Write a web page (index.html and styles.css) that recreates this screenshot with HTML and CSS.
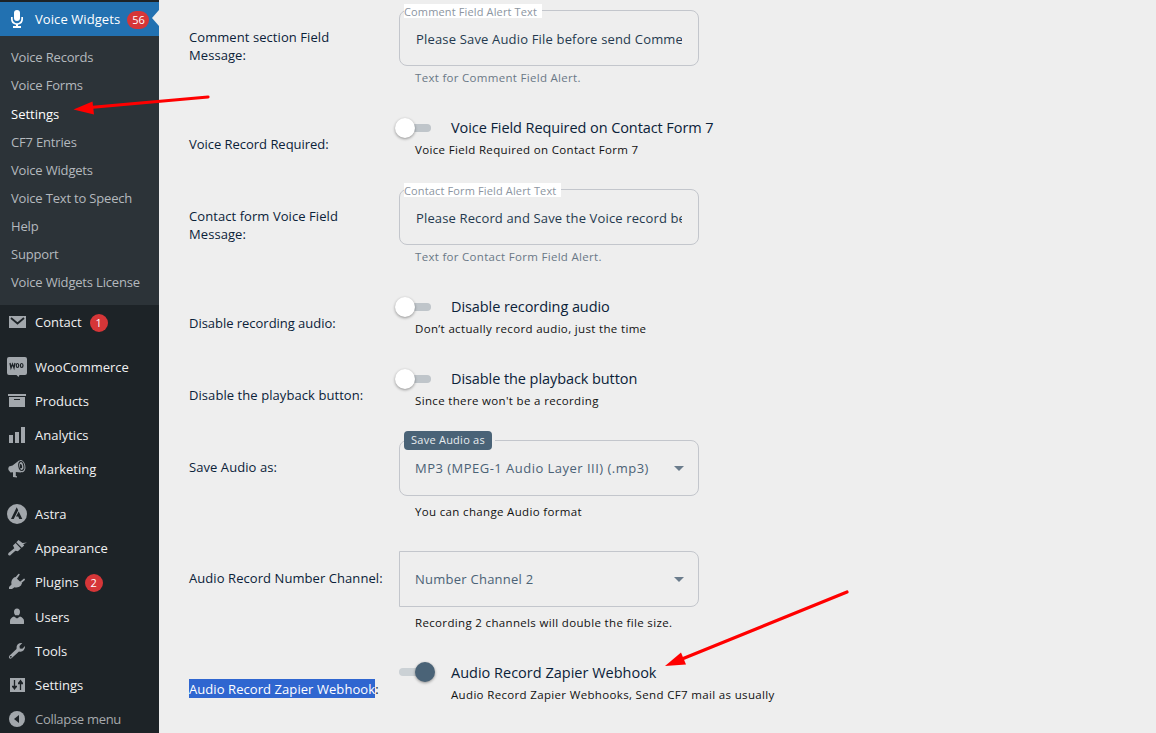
FILE: index.html
```html
<!DOCTYPE html>
<html lang="en">
<head>
<meta charset="utf-8">
<title>Voice Widgets Settings</title>
<link rel="stylesheet" href="styles.css">
</head>
<body>
<div class="app">
  <nav class="sidebar">
    <a class="item current">
      <svg class="icon" viewBox="0 0 20 20"><rect x="7" y="1" width="6" height="11" rx="3"/><path d="M4 8h1.700v2a4.300 4.300 0 0 0 8.600 0V8H16v2a5.800 5.800 0 0 1-5 5.700V17h3v2H6v-2h3v-1.300A5.800 5.800 0 0 1 4 10z"/></svg>
      <span>Voice Widgets</span><b class="badge wide">56</b>
    </a>
    <div class="submenu">
      <a>Voice Records</a>
      <a>Voice Forms</a>
      <a class="on">Settings</a>
      <a>CF7 Entries</a>
      <a>Voice Widgets</a>
      <a>Voice Text to Speech</a>
      <a>Help</a>
      <a>Support</a>
      <a>Voice Widgets License</a>
    </div>
    <a class="item">
      <svg class="icon" viewBox="0 0 20 20"><path d="M2 4h17v12H2z"/><path class="cut-line" d="M4 6l6.500 5.500L17 6" stroke-width="1.800"/></svg>
      <span>Contact</span><b class="badge b-contact">1</b>
    </a>
    <a class="item gap">
      <svg class="icon" viewBox="0 0 20 20"><path d="M2 0h16q2 0 2 2v14q0 2-2 2h-5.500l-1 2-2-2H2q-2 0-2-2V2q0-2 2-2z"/><path class="cut-line" d="M3 6l1 5 1.500-4L7 11l1-5" stroke-width="1.300"/><ellipse class="cut-line" cx="10.500" cy="8.500" rx="1.200" ry="2" stroke-width="1.200"/><ellipse class="cut-line" cx="14.700" cy="8.500" rx="1.300" ry="2" stroke-width="1.200"/></svg>
      <span>WooCommerce</span>
    </a>
    <a class="item">
      <svg class="icon" viewBox="0 0 20 20"><path d="M1 3h18v2H1zM2 6h16v10H2z"/><path class="cut" d="M7 8h6v1H7z"/></svg>
      <span>Products</span>
    </a>
    <a class="item">
      <svg class="icon" viewBox="0 0 20 20"><path d="M14 2h4v16h-4zM8 7h4v11H8zM2 10h4v8H2z"/></svg>
      <span>Analytics</span>
    </a>
    <a class="item">
      <svg class="icon" viewBox="0 0 20 20"><path d="M12 1.500L5.500 6.500 2 7.500Q.8 9 1.500 11l2 2.500 2.500-.2V18l4 .5v-1.300l-1.200-.2V13l5.200.5z"/><ellipse cx="14.300" cy="7.200" rx="4" ry="6.200" transform="rotate(-12 14.300 7.200)"/><ellipse class="cut-line" cx="14.300" cy="7" rx="2.500" ry="4.500" transform="rotate(-12 14.300 7)" stroke-width="1.100"/><path class="cut" d="M13 5q2.500 0 2 4l-2 .5z"/></svg>
      <span>Marketing</span>
    </a>
    <a class="item gap">
      <svg class="icon" viewBox="0 0 20 20"><circle cx="10" cy="10" r="10"/><path class="cut" d="M9.700 3.200L4 15h2.700l4.500-8.800zM11.700 7.500L9 12.500h2.200L12.300 15h3z"/></svg>
      <span>Astra</span>
    </a>
    <a class="item">
      <svg class="icon" viewBox="0 0 20 20"><path d="M11.500 2L9.300 4.200l5.500 5.600 2.400-2.400-1-1.200L20 4.500l-4.500.5zM8.600 5L6 7.600l1.300 2.600-5.800 4.700Q.5 16.500 1.700 17.300q1.100.7 2.200-.6l4.500-4 2.500.5 2.900-2.700z"/></svg>
      <span>Appearance</span>
    </a>
    <a class="item">
      <svg class="icon" viewBox="0 0 20 20"><path d="M11.300 2q1.200-.5 1.400.7L9.800 7l3 3 4.200-3.500q1.300.1.900 1.400L14.500 11l-.3 2.200q-3 3-6.700 2L5 17H2v-2l2.500-2.500Q3.500 8.500 7 5.500l1.500-.2z"/><path d="M8 5l7 6.500-3 3-6-5z"/></svg>
      <span>Plugins</span><b class="badge b-plugins">2</b>
    </a>
    <a class="item">
      <svg class="icon" viewBox="0 0 20 20"><path d="M10 1.500q3 0 3 3.500 0 2-1.200 3.200H8.200Q7 7 7 5q0-3.500 3-3.500zM7 9.500l3 2 3-2q4 1.500 4 4.500v2.500Q17 17 16 17H4q-1 0-1-.5V14q0-3 4-4.500z"/></svg>
      <span>Users</span>
    </a>
    <a class="item">
      <svg class="icon" viewBox="0 0 20 20"><path d="M16.700 9.300q-1.800 2-4.700 1.200l-7.200 6.600q-1.300 1.200-2.500.2-1-1.300.1-2.600L9.500 8Q9 5 10.800 3.300q1.800-1.600 4.500-1.200L12.500 5l.3 2.500 2.500.2L18 5q.3 2.500-1.300 4.300zM3.200 15.300q-.6 1 .2 1.300t1.200-.3q.4-1-.3-1.200-.6-.3-1.100.2z" fill-rule="evenodd"/></svg>
      <span>Tools</span>
    </a>
    <a class="item">
      <svg class="icon" viewBox="0 0 20 20"><path d="M3 3h15v14H3z"/><path class="cut-line" d="M7.500 5v8M13.500 15V7M5 11.500h5M11 8.500h5" stroke-width="1.300"/><path class="cut" d="M13.500 4.500L16 8h-5zM7.500 15L5 11.500h5z"/></svg>
      <span>Settings</span>
    </a>
    <a class="item collapse">
      <svg class="icon" viewBox="0 0 20 20"><circle cx="10" cy="10" r="8"/><path class="cut" d="M12 6v8l-5-4z"/></svg>
      <span>Collapse menu</span>
    </a>
  </nav>

  <main class="settings">
    <div class="row text">
      <div class="label">Comment section Field<br>Message:</div>
      <div class="control">
        <div class="field"><span class="legend plain">Comment Field Alert Text</span><span class="value">Please Save Audio File before send Comme</span></div>
        <p class="helper muted">Text for Comment Field Alert.</p>
      </div>
    </div>
    <div class="row toggle">
      <div class="label l-tight">Voice Record Required:</div>
      <div class="control">
        <div class="switch-line"><i class="switch"></i><span>Voice Field Required on Contact Form 7</span></div>
        <p class="helper">Voice Field Required on Contact Form 7</p>
      </div>
    </div>
    <div class="row text">
      <div class="label">Contact form Voice Field<br>Message:</div>
      <div class="control">
        <div class="field"><span class="legend plain">Contact Form Field Alert Text</span><span class="value v-record">Please Record and Save the Voice record be</span></div>
        <p class="helper muted">Text for Contact Form Field Alert.</p>
      </div>
    </div>
    <div class="row toggle">
      <div class="label l-tight">Disable recording audio:</div>
      <div class="control">
        <div class="switch-line"><i class="switch"></i><span>Disable recording audio</span></div>
        <p class="helper">Don’t actually record audio, just the time</p>
      </div>
    </div>
    <div class="row toggle">
      <div class="label">Disable the playback button:</div>
      <div class="control">
        <div class="switch-line"><i class="switch"></i><span>Disable the playback button</span></div>
        <p class="helper">Since there won't be a recording</p>
      </div>
    </div>
    <div class="row select">
      <div class="label">Save Audio as:</div>
      <div class="control">
        <div class="field"><span class="legend chip"><em>Save Audio as</em></span><span class="value v-format">MP3 (MPEG-1 Audio Layer III) (.mp3)</span><i class="caret"></i></div>
        <p class="helper">You can change Audio format</p>
      </div>
    </div>
    <div class="row select">
      <div class="label">Audio Record Number Channel:</div>
      <div class="control">
        <div class="field square"><span class="value">Number Channel 2</span><i class="caret"></i></div>
        <p class="helper">Recording 2 channels will double the file size.</p>
      </div>
    </div>
    <div class="row toggle last">
      <div class="label"><mark>Audio Record Zapier Webhook</mark>:</div>
      <div class="control">
        <div class="switch-line"><i class="switch checked"></i><span>Audio Record Zapier Webhook</span></div>
        <p class="helper indent">Audio Record Zapier Webhooks, Send CF7 mail as usually</p>
      </div>
    </div>
  </main>

  <svg class="arrows" viewBox="0 0 1156 733">
    <path d="M208 97L90 107.500M847 592L682 659"/>
    <polygon points="73.500,109.500 92.500,101.500 94,114.500"/>
    <polygon points="665,666 681,652.500 686,664.500"/>
  </svg>
</div>
</body>
</html>
```
FILE: styles.css
```css
* { box-sizing: border-box; }
body { margin: 0; background: #eee; font: 13px "Open Sans", "Noto Sans", sans-serif; }
.app { position: relative; display: flex; width: 1156px; height: 733px; overflow: hidden; }

/* Admin menu */
.sidebar { width: 159px; height: 733px; padding-top: 2px; background: #1d2327; flex: none; color: #f0f0f1; }
.item { display: flex; align-items: center; height: 34.200px; padding-left: 7px; line-height: 18px; white-space: nowrap; }
.item.gap { margin-top: 10.500px; }
.icon { width: 20px; height: 20px; margin-right: 8px; fill: #a2a7ac; flex: none; }
.cut { fill: #1d2327; }
.cut-line { fill: none; stroke: #1d2327; }
.current { position: relative; background: #2271b1; color: #fff; height: 34px; letter-spacing: .08px; }
.current .icon { fill: #fff; }
.current::after { content: ""; position: absolute; right: 0; top: 8px; border: 8px solid transparent; border-left: 0; border-right: 7px solid #eee; }
.collapse { color: #a7aaad; letter-spacing: -.3px; }
.badge { min-width: 18px; height: 18px; margin: 1px 0 0 7px; padding: 0 5px; border-radius: 9px; background: #d63638; color: #fff; font-size: 11px; font-weight: 400; line-height: 18px; text-align: center; }
.badge.wide { width: 22px; }
.badge.b-contact { margin-left: 8px; }
.badge.b-plugins { margin-left: 6px; }
.submenu { height: 269px; padding-top: 7.300px; background: #2c3338; color: #b4b9be; letter-spacing: -.18px; }
.submenu a { display: block; height: 28.120px; padding-left: 11px; line-height: 28px; white-space: nowrap; }
.submenu .on { color: #fff; letter-spacing: 0; }

/* Settings form */
.settings { flex: 1; padding-left: 30px; color: #0b2239; }
.row { display: grid; grid-template-columns: 210px 1fr; }
.row.text { height: 107px; }
.row.toggle { height: 72px; }
.row.select { height: 111px; }
.label { padding-top: 28px; line-height: 18px; white-space: nowrap; letter-spacing: .07px; }
.label.l-tight { letter-spacing: -.03px; }
mark { padding: 1px 0 0; background: #2f66d0; color: #fff; }
.control { padding-top: 10px; }
.field { position: relative; display: flex; align-items: center; width: 300px; height: 56px; padding: 0 16px; border: 1px solid #c3c6cc; border-radius: 8px; }
.field.square { border-radius: 0 8px 8px 0; }
.value { flex: 1; overflow: hidden; line-height: 24px; white-space: nowrap; color: #253a4f; letter-spacing: .17px; }
.text .value { padding-top: 2px; }
.value.v-record { letter-spacing: .14px; }
.select .value { color: #4b6276; margin-left: -1px; letter-spacing: .25px; }
.select .value.v-format { letter-spacing: .48px; }
.legend { position: absolute; top: -7px; left: 4px; white-space: nowrap; font-size: 11px; letter-spacing: .14px; }
.legend.plain { height: 14px; line-height: 15px; padding-right: 5px; background: #fff; color: #8c95a1; }
.legend.chip { top: -10px; padding-right: 3px; background: #eee; }
.chip em { display: block; width: 88px; height: 19px; line-height: 18px; padding-left: 7px; border-radius: 4px; background: #4a6377; color: #e8ecef; font-style: normal; letter-spacing: .25px; }
.caret { width: 0; border: 5px solid transparent; border-top-color: #6b7c8c; border-bottom: 0; margin-right: -2px; }
.helper { margin: 0; padding-left: 16px; font-size: 11.500px; line-height: 18px; white-space: nowrap; color: #111; letter-spacing: .34px; }
.text .helper { margin-top: 3px; letter-spacing: .3px; }
.select .helper { margin-top: 7px; }
.helper.muted { color: #6a7886; }
.helper.indent { padding-left: 52px; }
.switch-line { display: flex; align-items: center; height: 22px; margin-bottom: 2px; font-size: 14.500px; line-height: 20px; white-space: nowrap; letter-spacing: -.08px; }
.last .switch-line { height: 21px; margin-bottom: 3px; letter-spacing: 0; }
.switch { position: relative; width: 32px; height: 8px; margin-right: 20px; border-radius: 4px; background: #bfc5ca; }
.switch::after { content: ""; position: absolute; left: -4px; top: -6px; width: 20px; height: 20px; border-radius: 50%; background: #fff; box-shadow: 0 1px 3px rgba(0,0,0,.4); }
.switch.checked { margin-bottom: 1px; background: #cbd1d5; }
.switch.checked::after { left: 16px; background: #4a6377; }

/* Annotation arrows lie over the whole page */
.arrows { position: absolute; left: 0; top: 0; width: 1156px; height: 733px; fill: #f00; pointer-events: none; }
.arrows path { fill: none; stroke: #f00; stroke-width: 3.200; stroke-linecap: round; }
```
